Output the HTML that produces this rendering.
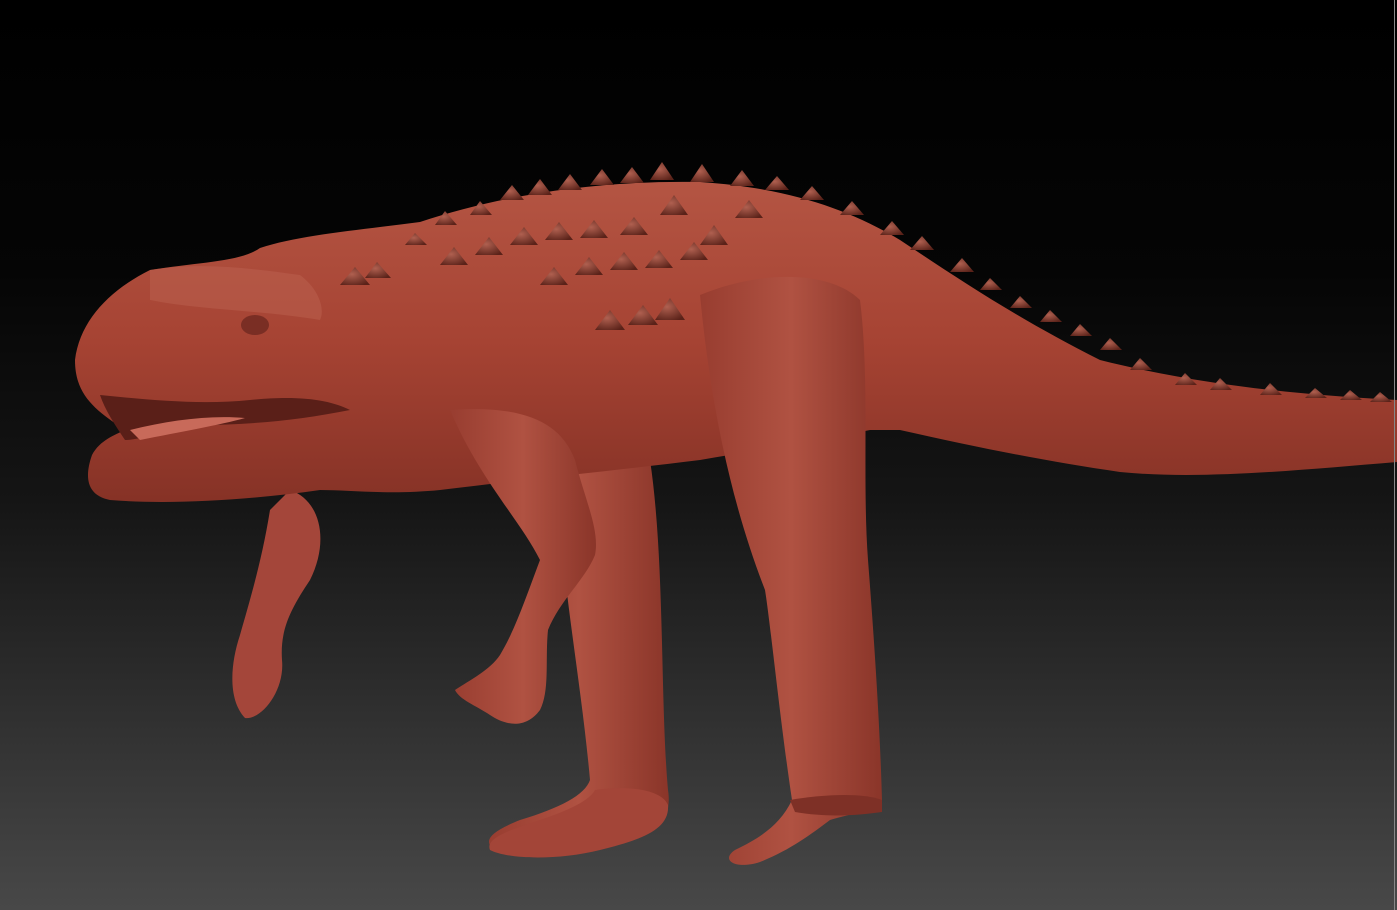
<!DOCTYPE html>
<html><head><style>
html,body{margin:0;padding:0;width:1397px;height:910px;overflow:hidden;background:#000}
svg{display:block}
</style></head><body>
<svg width="1397" height="910" viewBox="0 0 1397 910" xmlns="http://www.w3.org/2000/svg">
<defs>
<linearGradient id="bg" x1="0" y1="0" x2="0" y2="1">
<stop offset="0" stop-color="#000"/>
<stop offset="0.3" stop-color="#050505"/>
<stop offset="0.55" stop-color="#151515"/>
<stop offset="1" stop-color="#484848"/>
</linearGradient>
<linearGradient id="skin" x1="0" y1="0" x2="0" y2="1">
<stop offset="0" stop-color="#b45543"/>
<stop offset="0.5" stop-color="#a64333"/>
<stop offset="1" stop-color="#863226"/>
</linearGradient>
<linearGradient id="leg" x1="0" y1="0" x2="1" y2="0">
<stop offset="0" stop-color="#983d30"/>
<stop offset="0.5" stop-color="#b05242"/>
<stop offset="1" stop-color="#8a3529"/>
</linearGradient>
<radialGradient id="spike" cx="0.4" cy="0.4" r="0.7">
<stop offset="0" stop-color="#b06050"/>
<stop offset="1" stop-color="#5a2219"/>
</radialGradient>
</defs>
<rect width="1397" height="910" fill="url(#bg)"/>
<!-- far arm -->
<path d="M290,490 C320,500 330,540 310,580 C290,610 280,630 282,660 C285,690 262,720 245,718 C228,700 230,665 240,635 C250,600 262,560 270,510 Z" fill="#a4463a"/>
<!-- middle hind leg -->
<path d="M565,470 L650,460 C665,560 660,700 668,790 C672,815 660,830 640,835 C600,850 530,860 495,850 C480,840 495,830 520,820 C560,808 585,795 590,780 C582,690 565,600 560,520 Z" fill="url(#leg)"/>
<!-- tail and body -->
<path d="M75,360 C80,320 110,290 150,270 C200,262 240,262 260,248 C300,235 360,230 420,222 C500,195 600,180 700,182 C790,188 850,210 900,240 C960,280 1020,320 1100,360 C1200,385 1300,395 1397,400 L1397,462 C1300,470 1200,480 1120,472 C1050,462 980,448 900,430 L870,430 C820,440 760,450 700,460 C620,470 520,480 440,490 C390,495 350,490 320,490 C250,500 170,505 110,500 C85,495 85,475 92,455 C100,440 115,435 125,430 C95,410 75,395 75,360 Z" fill="url(#skin)"/>
<!-- mouth -->
<path d="M100,395 C150,400 200,405 250,400 C300,395 330,400 350,410 C300,420 250,425 200,425 C170,430 140,440 125,440 C115,425 105,410 100,395 Z" fill="#5a1f18"/>
<path d="M130,430 C170,420 210,415 245,418 C220,425 180,432 140,440 Z" fill="#c86a5a"/>
<!-- head highlight -->
<path d="M150,270 C200,262 250,268 300,275 C320,290 325,310 320,320 C260,310 200,310 150,300 Z" fill="#bc6250" opacity="0.5"/>
<ellipse cx="255" cy="325" rx="14" ry="10" fill="#7a2e24"/>
<!-- hind leg near -->
<path d="M700,295 C760,270 830,270 860,300 C870,380 862,480 868,560 C875,650 880,730 882,800 C870,812 845,815 830,820 C810,835 790,850 760,862 C735,870 720,860 735,850 C760,838 780,825 792,800 C780,720 770,620 765,590 C730,500 710,400 700,295 Z" fill="url(#leg)"/>
<path d="M790,800 C820,795 860,792 882,800 L882,812 C860,815 830,818 795,812 Z" fill="#7e3026"/>
<!-- front arm near -->
<path d="M450,410 C520,405 560,420 575,460 C585,500 600,530 595,555 C585,580 560,600 548,630 C545,660 550,690 540,710 C525,730 505,725 490,715 C475,705 460,700 455,690 C470,680 490,670 500,655 C515,630 525,600 540,560 C520,520 480,480 450,410 Z" fill="url(#leg)"/>
<!-- foot middle -->
<path d="M595,790 C630,785 662,790 668,805 C670,830 640,840 600,850 C560,860 510,860 490,850 C485,838 510,830 540,820 C570,810 590,800 595,790 Z" fill="#a34538"/>
<!-- spikes -->
<g fill="url(#spike)">
<path d="M340,285 l15,-18 l15,18 z"/><path d="M365,278 l12,-16 l14,16 z"/>
<path d="M405,245 l10,-12 l12,12 z"/><path d="M435,225 l10,-14 l12,14 z"/>
<path d="M470,215 l10,-14 l12,14 z"/><path d="M500,200 l12,-15 l12,15 z"/>
<path d="M528,195 l12,-16 l12,16 z"/><path d="M558,190 l12,-16 l12,16 z"/>
<path d="M590,185 l12,-16 l12,16 z"/><path d="M620,183 l12,-16 l12,16 z"/>
<path d="M650,180 l12,-18 l12,18 z"/><path d="M690,182 l12,-18 l12,18 z"/>
<path d="M730,186 l12,-16 l12,16 z"/><path d="M765,190 l12,-14 l12,14 z"/>
<path d="M800,200 l12,-14 l12,14 z"/><path d="M840,215 l12,-14 l12,14 z"/>
<path d="M880,235 l12,-14 l12,14 z"/><path d="M910,250 l12,-14 l12,14 z"/>
<path d="M950,272 l12,-14 l12,14 z"/><path d="M980,290 l10,-12 l12,12 z"/>
<path d="M1010,308 l10,-12 l12,12 z"/><path d="M1040,322 l10,-12 l12,12 z"/>
<path d="M1070,336 l10,-12 l12,12 z"/><path d="M1100,350 l10,-12 l12,12 z"/>
<path d="M1130,370 l10,-12 l12,12 z"/><path d="M1175,385 l10,-12 l12,12 z"/>
<path d="M1210,390 l10,-12 l12,12 z"/><path d="M1260,395 l10,-12 l12,12 z"/>
<path d="M1305,398 l10,-10 l12,10 z"/><path d="M1340,400 l10,-10 l12,10 z"/>
<path d="M1370,402 l10,-10 l12,10 z"/>
<path d="M440,265 l14,-18 l14,18 z"/><path d="M475,255 l14,-18 l14,18 z"/>
<path d="M510,245 l14,-18 l14,18 z"/><path d="M545,240 l14,-18 l14,18 z"/>
<path d="M580,238 l14,-18 l14,18 z"/><path d="M620,235 l14,-18 l14,18 z"/>
<path d="M660,215 l14,-20 l14,20 z"/><path d="M700,245 l14,-20 l14,20 z"/>
<path d="M735,218 l14,-18 l14,18 z"/><path d="M540,285 l14,-18 l14,18 z"/>
<path d="M575,275 l14,-18 l14,18 z"/><path d="M610,270 l14,-18 l14,18 z"/>
<path d="M645,268 l14,-18 l14,18 z"/><path d="M680,260 l14,-18 l14,18 z"/>
<path d="M595,330 l15,-20 l15,20 z"/><path d="M628,325 l15,-20 l15,20 z"/>
<path d="M655,320 l15,-22 l15,22 z"/>
</g>
<rect x="1394" y="0" width="1" height="910" fill="#888"/>
</svg>
</body></html>
